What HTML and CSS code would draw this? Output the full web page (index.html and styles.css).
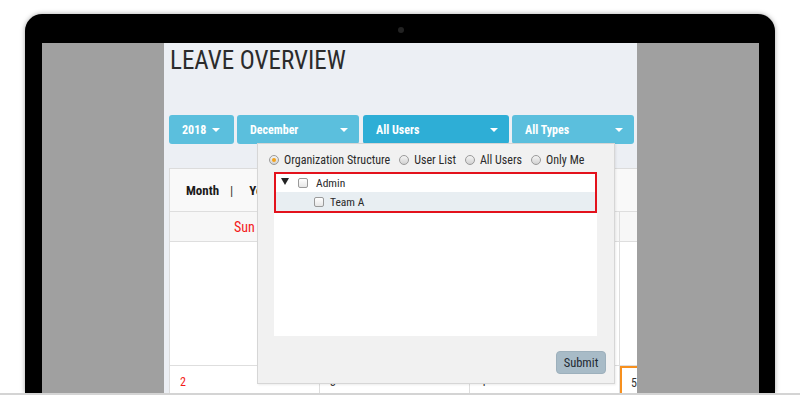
FILE: index.html
```html
<!DOCTYPE html>
<html lang="en">
<head>
    <meta charset="UTF-8">
    <meta name="viewport" content="width=device-width, initial-scale=1.0">
    <title>Leave Overview</title>
    <link rel="stylesheet" href="styles.css">
</head>
<body>
    <div class="laptop">
        <div class="bezel-top"><div class="camera"></div></div>
        <div class="screen">
            <div class="side"></div>
            <div class="app">
                <h1 class="title">LEAVE OVERVIEW</h1>
                <div class="filters">
                    <div class="dd dd-year"><span>2018</span><span class="caret"></span></div>
                    <div class="dd dd-month"><span>December</span><span class="caret"></span></div>
                    <div class="dd dd-users active"><span>All Users</span><span class="caret"></span></div>
                    <div class="dd dd-types"><span>All Types</span><span class="caret"></span></div>
                </div>

                <div class="calendar">
                    <div class="cal-toolbar">
                        <span class="view">Month</span>
                        <span class="sep">|</span>
                        <span class="view">Year</span>
                    </div>
                    <div class="cal-head">
                        <div class="cell sun">Sun</div>
                        <div class="cell">Mon</div>
                        <div class="cell">Tue</div>
                        <div class="cell"></div>
                    </div>
                    <div class="cal-week tall">
                        <div class="cell"></div>
                        <div class="cell"></div>
                        <div class="cell"></div>
                        <div class="cell"></div>
                    </div>
                    <div class="cal-week">
                        <div class="cell sun">2</div>
                        <div class="cell">3</div>
                        <div class="cell">4</div>
                        <div class="cell today">5</div>
                    </div>
                </div>

                <!-- users dropdown panel -->
                <div class="popup">
                    <div class="radios">
                        <label class="radio-item"><span class="radio checked"></span>Organization Structure</label>
                        <label class="radio-item"><span class="radio"></span>User List</label>
                        <label class="radio-item"><span class="radio"></span>All Users</label>
                        <label class="radio-item"><span class="radio"></span>Only Me</label>
                    </div>
                    <div class="tree">
                        <div class="tree-sel">
                            <div class="tree-row">
                                <span class="toggle"></span>
                                <span class="check"></span>
                                <span class="node">Admin</span>
                            </div>
                            <div class="tree-row child">
                                <span class="check"></span>
                                <span class="node">Team A</span>
                            </div>
                        </div>
                    </div>
                    <div class="popup-foot">
                        <button class="submit">Submit</button>
                    </div>
                </div>
            </div>
            <div class="side"></div>
        </div>
    </div>
    <div class="base"></div>
</body>
</html>
```

FILE: styles.css
```css
body {
    margin: 0;
    background-color: #fff;
    font-family: "Roboto Condensed", "DejaVu Sans Condensed", "Liberation Sans", sans-serif;
    overflow: hidden;
    height: 395px;
}
.laptop {
    width: 750px;
    height: 379px;
    margin: 14px 0 0 25px;
    padding: 0 16px 0 17px;
    box-sizing: border-box;
    background-color: #000;
    border-radius: 17px 17px 0 0;
    box-shadow: 0 0 5px rgba(0, 0, 0, 0.35);
}
.bezel-top {
    height: 29px;
    display: flex;
    align-items: center;
    justify-content: center;
}
.camera {
    width: 6px;
    height: 6px;
    border-radius: 50%;
    background-color: #222;
    margin-top: 3px;
}
.screen {
    display: flex;
    height: 350px;
}
.side {
    width: 122px;
    background-color: #a0a0a0;
}
.app {
    width: 473px;
    position: relative;
    overflow: hidden;
    background-color: #eceff4;
    padding: 3px 0 0 5px;
    box-sizing: border-box;
}
.title {
    margin: 0;
    padding-left: 1px;
    font-size: 25px;
    line-height: 30px;
    font-weight: normal;
    color: #2b2b2b;
}
.filters {
    display: flex;
    margin-top: 39px;
    height: 29px;
}
.dd {
    display: flex;
    align-items: center;
    justify-content: space-between;
    padding: 0 11px 0 13px;
    box-sizing: border-box;
    background-color: #5bbfdd;
    border-radius: 3px;
    color: #fff;
    font-size: 12px;
    font-weight: bold;
    margin-right: 3px;
    white-space: nowrap;
}
.dd.active {
    background-color: #2eaed6;
}
.dd-year { width: 65px; padding-right: 14px; }
.dd-month { width: 122px; margin-right: 4px; }
.dd-users { width: 146px; }
.dd-types { width: 122px; }
.caret {
    width: 0;
    height: 0;
    border-left: 4px solid transparent;
    border-right: 4px solid transparent;
    border-top: 4px solid #fff;
}
.calendar {
    width: 480px;
    margin-top: 24px;
    border-top: 1px solid #dcdcdc;
    border-left: 1px solid #dcdcdc;
    background-color: #fff;
}
.cal-toolbar {
    height: 42px;
    display: flex;
    align-items: center;
    padding-left: 16px;
    background-color: #f9f9f9;
    border-bottom: 1px solid #dedede;
    font-size: 13px;
    font-weight: bold;
    color: #1a1a1a;
}
.sep {
    margin: 0 16px 0 11px;
    color: #333;
    font-weight: normal;
}
.cal-head {
    display: flex;
    height: 29px;
    background-color: #f7f7f7;
    border-bottom: 1px solid #dedede;
}
.cal-head .cell {
    display: flex;
    align-items: center;
    justify-content: center;
    font-size: 14px;
    color: #444;
}
.cell {
    width: 150px;
    flex-shrink: 0;
    box-sizing: border-box;
    border-right: 1px solid #dedede;
}
.cal-week {
    display: flex;
    height: 40px;
    border-bottom: 1px solid #dedede;
}
.cal-week.tall {
    height: 123px;
}
.cal-week .cell {
    padding: 9px 0 0 10px;
    font-size: 12px;
    color: #333;
}
.cal-head .cell.sun,
.cal-week .cell.sun {
    color: #f31a1a;
}
.cal-week .cell.today {
    border: 2px solid #f7901e;
    border-bottom: none;
    padding: 8px 0 0 9px;
}
.popup {
    position: absolute;
    left: 93px;
    top: 100px;
    width: 358px;
    height: 241px;
    box-sizing: border-box;
    display: flex;
    flex-direction: column;
    background-color: #f1f1f1;
    border: 1px solid #d6d6d6;
    box-shadow: 1px 1px 2px rgba(0, 0, 0, 0.08);
    color: #2b2b2b;
    font-size: 12px;
}
.radios {
    display: flex;
    align-items: center;
    height: 14px;
    padding: 9px 0 0 11px;
    white-space: nowrap;
}
.radio-item {
    display: flex;
    align-items: center;
    margin-right: 9px;
}
.radio {
    width: 10px;
    height: 10px;
    box-sizing: border-box;
    border-radius: 50%;
    border: 1px solid #9a9a9a;
    background: linear-gradient(#f4f4f4, #d2d2d2);
    margin-right: 5px;
    display: flex;
    align-items: center;
    justify-content: center;
}
.radio.checked::after {
    content: "";
    width: 4px;
    height: 4px;
    border-radius: 50%;
    background-color: #f2a21c;
}
.tree {
    width: 323px;
    height: 164px;
    margin: 5px 0 0 16px;
    background-color: #fff;
    font-size: 11.5px;
}
.tree-sel {
    border: 2px solid #e3121c;
}
.tree-row {
    display: flex;
    align-items: center;
    height: 18px;
    padding-left: 5px;
    white-space: nowrap;
}
.tree-row.child {
    height: 19px;
    padding-left: 38px;
    background-color: #e8eef2;
}
.toggle {
    width: 0;
    height: 0;
    border-left: 4px solid transparent;
    border-right: 4px solid transparent;
    border-top: 7px solid #222;
    margin: 0 9px 3px 0;
}
.check {
    width: 10px;
    height: 10px;
    box-sizing: border-box;
    border: 1px solid #9a9a9a;
    border-radius: 2px;
    background: linear-gradient(#fff, #e6e6e6);
    margin-right: 8px;
}
.child .check {
    margin-right: 6px;
}
.popup-foot {
    display: flex;
    justify-content: flex-end;
    margin-top: 15px;
    padding-right: 8px;
}
.submit {
    width: 50px;
    height: 23px;
    padding: 0;
    font-family: inherit;
    font-size: 12.5px;
    color: #1f2a33;
    background-color: #a8bbc7;
    border: 1px solid #9db0bc;
    border-radius: 4px;
}
.base {
    height: 2px;
    background-color: #d4d4d4;
}
```
